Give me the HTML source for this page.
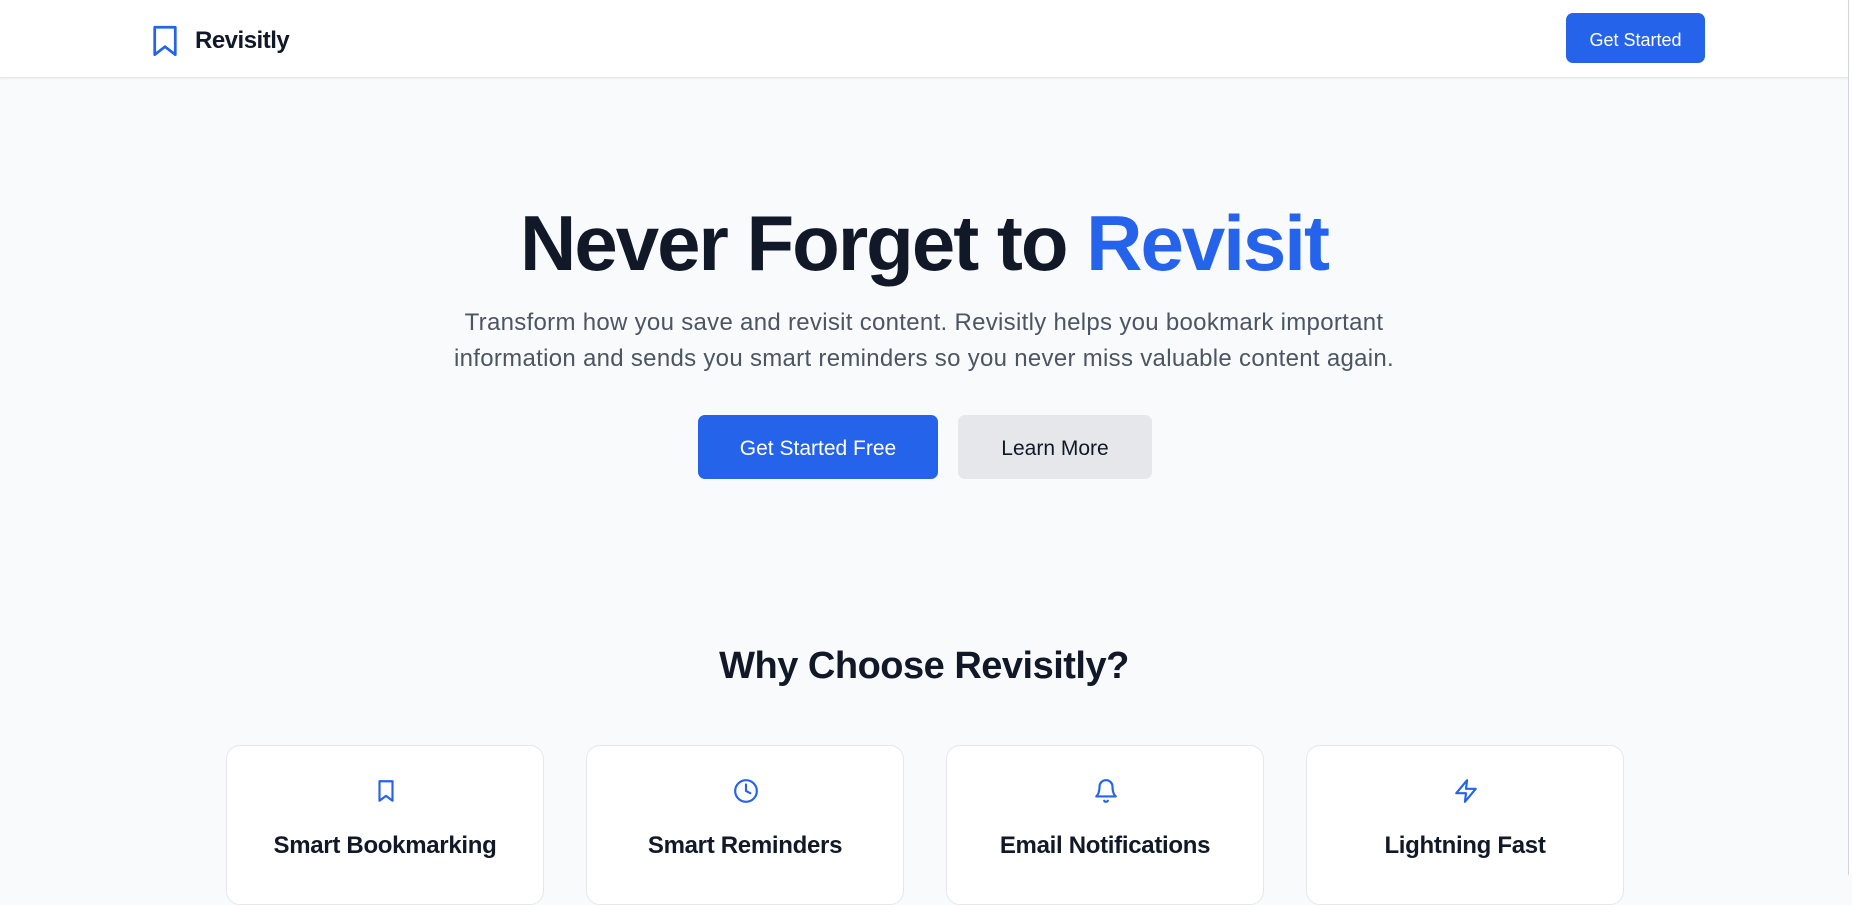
<!DOCTYPE html>
<html><head><meta charset="utf-8"><style>
*{margin:0;padding:0;box-sizing:border-box}
body{width:1852px;height:875px;overflow:hidden;background:#f9fafb;font-family:"Liberation Sans",sans-serif;color:#111827;position:relative}
header{position:absolute;left:0;top:0;width:1848px;height:78px;background:#fff;border-bottom:1px solid #e5e7eb;box-shadow:0 1px 2px rgba(0,0,0,.05)}
.sb{position:absolute;right:0;top:0;width:4px;height:875px;background:#fff;border-left:1px solid #d1d5db}
.logo{position:absolute;left:151px;top:25px;display:flex;align-items:center}
.logo span{font-weight:bold;font-size:24px;margin-left:16px;letter-spacing:-0.5px}
.hbtn{position:absolute;left:1566px;top:13px;width:139px;height:50px;background:#2563eb;color:#fff;border-radius:7px;font-size:18px;display:flex;align-items:center;justify-content:center;padding-top:4px}
h1{position:absolute;top:197px;left:0;width:1848px;text-align:center;font-size:78px;font-weight:bold;letter-spacing:-2px;line-height:1.2}
h1 em{font-style:normal;color:#2563eb}
p.sub{position:absolute;top:305px;left:0;width:1848px;text-align:center;font-size:24px;letter-spacing:0.3px;line-height:36px;color:#4b5563}
.b1,.b2{position:absolute;top:415px;height:64px;border-radius:7px;font-size:21px;display:flex;align-items:center;justify-content:center;padding-top:3px}
.b1{left:698px;width:240px;background:#2563eb;color:#fff}
.b2{left:958px;width:194px;background:#e5e7eb;color:#111827}
h2{position:absolute;top:645px;left:0;width:1848px;text-align:center;font-size:38px;font-weight:bold;letter-spacing:-0.5px}
.card{position:absolute;top:745px;width:318px;height:160px;background:#fff;border:1px solid #e5e7eb;border-radius:14px;text-align:center}
.card svg{position:absolute;left:146px;top:32px}
.card div{position:absolute;top:86px;width:100%;font-size:24px;font-weight:bold;letter-spacing:-0.3px}
</style></head><body>
<header>
<div class="logo"><svg width="28" height="32" viewBox="0 0 24 28" fill="none" stroke="#2563eb" stroke-width="2.4" stroke-linejoin="round"><path d="M3 2h18v24l-9-7-9 7z"/></svg><span>Revisitly</span></div>
<div class="hbtn">Get Started</div>
</header>
<div class="sb"></div>
<h1>Never Forget to <em>Revisit</em></h1>
<p class="sub">Transform how you save and revisit content. Revisitly helps you bookmark important<br>information and sends you smart reminders so you never miss valuable content again.</p>
<div class="b1">Get Started Free</div>
<div class="b2">Learn More</div>
<h2>Why Choose Revisitly?</h2>
<div class="card" style="left:226px"><svg width="26" height="26" viewBox="0 0 24 24" fill="none" stroke="#2563eb" stroke-width="2" stroke-linejoin="round"><path d="M6 3h12v18l-6-4.5L6 21z"/></svg><div>Smart Bookmarking</div></div>
<div class="card" style="left:586px"><svg width="26" height="26" viewBox="0 0 24 24" fill="none" stroke="#2563eb" stroke-width="2" stroke-linecap="round"><circle cx="12" cy="12" r="10"/><path d="M12 6v6l4 2"/></svg><div>Smart Reminders</div></div>
<div class="card" style="left:946px"><svg width="26" height="26" viewBox="0 0 24 24" fill="none" stroke="#2563eb" stroke-width="2" stroke-linecap="round" stroke-linejoin="round"><path d="M6 8a6 6 0 0 1 12 0c0 7 3 9 3 9H3s3-2 3-9"/><path d="M10.3 21a1.94 1.94 0 0 0 3.4 0"/></svg><div>Email Notifications</div></div>
<div class="card" style="left:1306px"><svg width="26" height="26" viewBox="0 0 24 24" fill="none" stroke="#2563eb" stroke-width="2" stroke-linejoin="round"><path d="M13 2 3 14h9l-1 8 10-12h-9l1-8z"/></svg><div>Lightning Fast</div></div>
</body></html>
